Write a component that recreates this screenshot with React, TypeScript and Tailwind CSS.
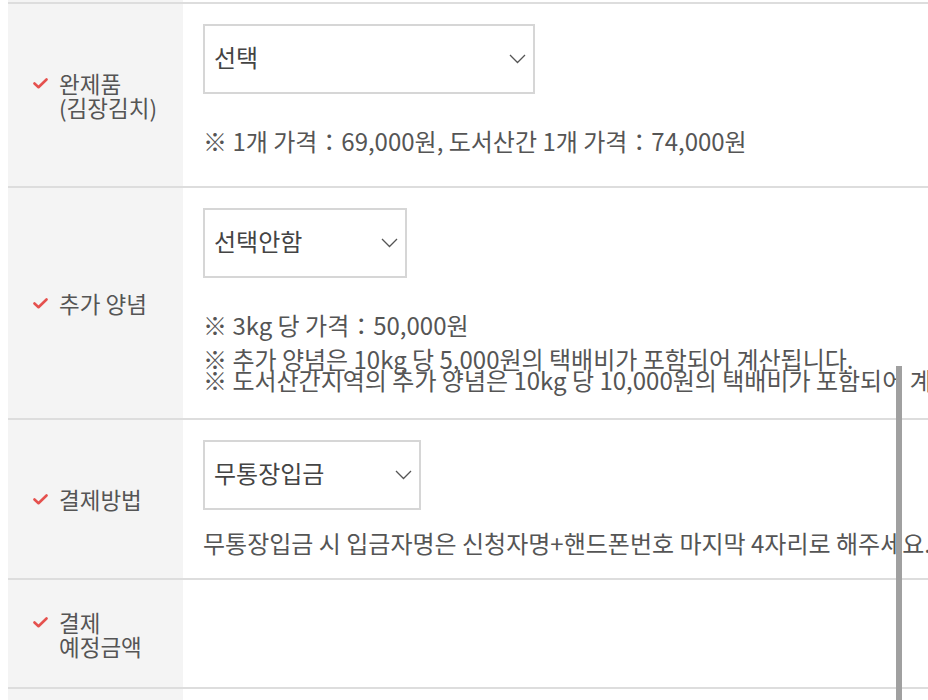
import React from "react";

const font = "font-['Noto_Sans_CJK_KR','Noto_Sans',sans-serif]";

function Check() {
  return (
    <svg width="15" height="11" viewBox="0 0 15 11" className="mt-[7px] shrink-0">
      <path d="M1.5 5.5 L5.5 9.2 L13.5 1.5" fill="none" stroke="#e5514e" strokeWidth="2.6" strokeLinecap="round" strokeLinejoin="round" />
    </svg>
  );
}

function Chevron() {
  return (
    <svg width="17" height="10" viewBox="0 0 17 10" className="shrink-0">
      <path d="M1 1 L8.5 8.5 L16 1" fill="none" stroke="#555" strokeWidth="1.3" />
    </svg>
  );
}

function Select({ label, width }: { label: string; width: string }) {
  return (
    <div className={`flex h-[70px] items-center justify-between border-2 border-[#d6d6d6] bg-white pl-[9px] pr-[7px] ${width}`}>
      <span className="-mt-[5px] text-[24px] leading-none text-[#444]">{label}</span>
      <Chevron />
    </div>
  );
}

function Label({ lines }: { lines: string[] }) {
  return (
    <div className="flex w-[175px] shrink-0 items-center bg-[#f4f4f4] pl-[25px]">
      <div className="flex items-start gap-[11px]">
        <Check />
        <div className="text-[22.5px] leading-[24px] text-[#555]">
          {lines.map((l) => (
            <div key={l}>{l}</div>
          ))}
        </div>
      </div>
    </div>
  );
}

export default function App() {
  return (
    <div className={`relative h-[700px] w-[928px] overflow-hidden bg-white pl-2 ${font}`}>
      <div className="h-[2px] w-[175px] bg-[#f4f4f4]" />
      <div className="flex h-[184px] border-t-2 border-[#dddddd]">
        <Label lines={["완제품", "(김장김치)"]} />
        <div className="flex-1 pl-5 pt-5">
          <Select label="선택" width="w-[332px]" />
          <p className="mt-[32px] whitespace-nowrap text-[24px] leading-[30px] text-[#555]">
            ※ 1개 가격：69,000원, 도서산간 1개 가격：74,000원
          </p>
        </div>
      </div>
      <div className="flex h-[232px] border-t-2 border-[#dddddd]">
        <Label lines={["추가 양념"]} />
        <div className="flex-1 pl-5 pt-5">
          <Select label="선택안함" width="w-[204px]" />
          <p className="mt-[32px] whitespace-nowrap text-[24px] leading-[30px] text-[#555]">
            ※ 3kg 당 가격：50,000원
          </p>
          <div className="mt-[8px] whitespace-nowrap text-[24px] leading-[21px] text-[#555]">
            <div>※ 추가 양념은 10kg 당 5,000원의 택배비가 포함되어 계산됩니다.</div>
            <div>※ 도서산간지역의 추가 양념은 10kg 당 10,000원의 택배비가 포함되어 계산됩니다.</div>
          </div>
        </div>
      </div>
      <div className="flex h-[160px] border-t-2 border-[#dddddd]">
        <Label lines={["결제방법"]} />
        <div className="flex-1 pl-5 pt-5">
          <Select label="무통장입금" width="w-[218px]" />
          <p className="mt-[18px] whitespace-nowrap text-[24px] leading-[30px] text-[#555]">
            무통장입금 시 입금자명은 신청자명+핸드폰번호 마지막 4자리로 해주세요.
          </p>
        </div>
      </div>
      <div className="flex h-[109px] border-t-2 border-[#dddddd]">
        <Label lines={["결제", "예정금액"]} />
        <div className="flex-1" />
      </div>
      <div className="flex h-[40px] border-t-2 border-[#dddddd]">
        <div className="w-[175px] shrink-0 bg-[#f4f4f4]" />
        <div className="flex-1" />
      </div>
      <div className="absolute left-[896px] top-[366px] h-[340px] w-[6px] bg-[#a0a0a0]" />
    </div>
  );
}
